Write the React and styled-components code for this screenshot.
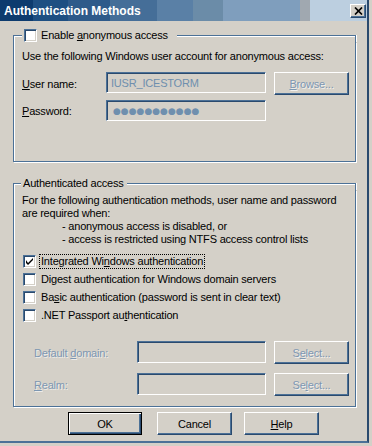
import React from "react";
import styled, { createGlobalStyle, css } from "styled-components";

const FACE = "#d4d0c8";
const SHADOW = "#4c7197";
const DARK = "#2a4a6e";
const DIS = "#7d97b2";

const Global = createGlobalStyle`
  html, body { margin: 0; padding: 0; background: ${FACE}; }
  body { font-family: "Liberation Sans", Arial, sans-serif; font-size: 11px; letter-spacing: -0.2px; color: #000; }
`;

const Screen = styled.div`
  width: 372px;
  height: 446px;
  display: flex;
  background: ${FACE};
  overflow: hidden;
`;

const Window = styled.div`
  width: 369px;
  height: 443px;
  box-sizing: border-box;
  border-right: 2px solid ${DARK};
  border-bottom: 2px solid ${SHADOW};
  background: ${FACE};
  display: flex;
  flex-direction: column;
`;

const TitleBar = styled.div`
  height: 21px;
  flex: none;
  display: flex;
  align-items: center;
  justify-content: space-between;
  padding: 0 1px 0 4px;
  background: linear-gradient(
    to right,
    #0d3b6e 0px, #0d3b6e 33px,
    #1e4f82 33px, #1e4f82 68px,
    #2e5a8a 68px, #2e5a8a 110px,
    #456e98 110px, #456e98 157px,
    #5a80a6 157px, #5a80a6 193px,
    #6b8ca8 193px, #6b8ca8 223px,
    #7f9ebd 223px, #7f9ebd 300px,
    #a0a8b0 300px, #a0a8b0 310px,
    #bccfe0 310px
  );
`;

const Title = styled.span`
  color: #fff;
  font-weight: bold;
  font-size: 12px;
  letter-spacing: 0;
`;

const CloseButton = styled.div`
  width: 16px;
  height: 14px;
  box-sizing: border-box;
  display: flex;
  align-items: center;
  justify-content: center;
  background: ${FACE};
  border: 1px solid;
  border-color: #fff ${DARK} ${DARK} #fff;
  box-shadow: inset -1px -1px 0 ${SHADOW};
`;

const Content = styled.div`
  flex: 1;
  display: flex;
  flex-direction: column;
  padding: 7px 11px 0 13px;
`;

const Group = styled.div`
  display: flex;
  flex-direction: column;
  margin-top: ${(p) => p.$top || 0}px;
`;

const GroupHeader = styled.div`
  display: flex;
  height: 14px;
`;

const CornerLeft = styled.div`
  width: ${(p) => p.$w}px;
  flex: none;
  margin-top: 7px;
  border-top: 1px solid ${SHADOW};
  border-left: 1px solid ${SHADOW};
  box-shadow: inset 1px 1px 0 #fff;
`;

const CornerRight = styled.div`
  flex: 1;
  margin-top: 7px;
  border-top: 1px solid ${SHADOW};
  border-right: 1px solid ${SHADOW};
  box-shadow: inset 0 1px 0 #fff, 1px 0 0 #fff;
`;

const Legend = styled.div`
  display: flex;
  align-items: center;
  gap: 4px;
  padding: 0 ${(p) => p.$pr}px 0 2px;
  line-height: 14px;
`;

const GroupBody = styled.div`
  height: ${(p) => p.$h}px;
  box-sizing: border-box;
  border: 1px solid ${SHADOW};
  border-top: 0;
  box-shadow: inset 1px 0 0 #fff, 1px 1px 0 #fff;
  padding: ${(p) => p.$pt}px 8px 0 8px;
  display: flex;
  flex-direction: column;
`;

const Text = styled.div`
  line-height: 13px;
  padding-left: ${(p) => p.$indent || 0}px;
  white-space: nowrap;
`;

const FormRow = styled.div`
  display: flex;
  align-items: center;
  height: ${(p) => p.$h || 23}px;
  margin-top: ${(p) => p.$top || 0}px;
`;

const FieldLabel = styled.span`
  width: ${(p) => p.$w}px;
  box-sizing: border-box;
  padding-left: ${(p) => p.$indent || 0}px;
  flex: none;
  color: ${(p) => (p.$disabled ? DIS : "#000")};
  ${(p) => p.$disabled && css`text-shadow: 1px 1px 0 rgba(255,255,255,0.6);`}
`;

const Field = styled.div`
  width: ${(p) => p.$w}px;
  height: ${(p) => p.$h || 21}px;
  box-sizing: border-box;
  flex: none;
  display: flex;
  align-items: center;
  padding-left: 4px;
  background: ${FACE};
  color: #6f8fae;
  border: 1px solid;
  border-color: ${SHADOW} #fff #fff ${SHADOW};
  box-shadow: inset 1px 1px 0 ${DARK}, inset -1px -1px 0 ${FACE};
  margin-right: 8px;
  align-self: flex-start;
`;

const Dots = styled.span`
  font-family: "DejaVu Sans", sans-serif;
  font-size: 9px;
  letter-spacing: 0px;
  color: #6f8fae;
  padding-left: 2px;
`;

const Button = styled.div`
  width: ${(p) => p.$w || 75}px;
  height: 23px;
  box-sizing: border-box;
  flex: none;
  display: flex;
  align-items: center;
  justify-content: center;
  margin-left: ${(p) => p.$ml || 0}px;
  background: ${FACE};
  color: ${(p) => (p.$disabled ? DIS : "#000")};
  ${(p) => p.$disabled && css`text-shadow: 1px 1px 0 rgba(255,255,255,0.7);`}
  ${(p) =>
    p.$default
      ? css`
          border: 1px solid #000;
          box-shadow: inset 1px 1px 0 #fff, inset -1px -1px 0 ${DARK}, inset -2px -2px 0 ${SHADOW};
        `
      : css`
          border: 1px solid;
          border-color: #fff ${DARK} ${DARK} #fff;
          box-shadow: inset -1px -1px 0 ${SHADOW};
        `}
`;

const CheckList = styled.div`
  display: flex;
  flex-direction: column;
  margin-top: 6px;
  padding-left: 1px;
`;

const CheckRow = styled.div`
  display: flex;
  align-items: center;
  height: 18px;
  gap: 4px;
`;

const Box = styled.div`
  width: 13px;
  height: 13px;
  box-sizing: border-box;
  flex: none;
  background: #fff;
  border: 1px solid;
  border-color: ${SHADOW} #fff #fff ${SHADOW};
  box-shadow: inset 1px 1px 0 ${DARK}, inset -1px -1px 0 ${FACE};
  display: flex;
  align-items: center;
  justify-content: center;
`;

const CheckLabel = styled.span`
  padding: 0 1px;
  line-height: 13px;
  border: 1px dotted ${(p) => (p.$focus ? "#000" : "transparent")};
  margin-left: -1px;
  white-space: nowrap;
`;

const ButtonRow = styled.div`
  display: flex;
  margin-top: 5px;
  padding-left: 55px;
`;

const U = styled.span`
  text-decoration: underline;
  text-underline-offset: 1px;
`;

function CheckBox({ checked }) {
  return (
    <Box>
      {checked && (
        <svg width="9" height="9" viewBox="0 0 9 9">
          <path d="M1 3v3l2 2 5-5V1L3 6z" fill="#000" />
        </svg>
      )}
    </Box>
  );
}

export default function App() {
  return (
    <>
      <Global />
      <Screen>
        <Window>
          <TitleBar>
            <Title>Authentication Methods</Title>
            <CloseButton>
              <svg width="9" height="8" viewBox="0 0 9 8">
                <path d="M1 0.5L8 7.5M8 0.5L1 7.5" stroke="#000" strokeWidth="1.7" />
              </svg>
            </CloseButton>
          </TitleBar>
          <Content>
            <Group>
              <GroupHeader>
                <CornerLeft $w={8} />
                <Legend $pr={9}>
                  <CheckBox />
                  <span>
                    Enable <U>a</U>nonymous access
                  </span>
                </Legend>
                <CornerRight />
              </GroupHeader>
              <GroupBody $h={120} $pt={8}>
                <Text>Use the following Windows user account for anonymous access:</Text>
                <FormRow $top={9}>
                  <FieldLabel $w={84}>
                    <U>U</U>ser name:
                  </FieldLabel>
                  <Field $w={160}>IUSR_ICESTORM</Field>
                  <Button $disabled>
                    <span>
                      <U>B</U>rowse...
                    </span>
                  </Button>
                </FormRow>
                <FormRow $top={5} $h={21}>
                  <FieldLabel $w={84}>
                    <U>P</U>assword:
                  </FieldLabel>
                  <Field $w={160}>
                    <Dots>●●●●●●●●●●●</Dots>
                  </Field>
                </FormRow>
              </GroupBody>
            </Group>

            <Group $top={14}>
              <GroupHeader>
                <CornerLeft $w={7} />
                <Legend $pr={3}>
                  <span>Authenticated access</span>
                </Legend>
                <CornerRight />
              </GroupHeader>
              <GroupBody $h={217} $pt={4}>
                <Text>For the following authentication methods, user name and password</Text>
                <Text>are required when:</Text>
                <Text $indent={40}>- anonymous access is disabled, or</Text>
                <Text $indent={40}>- access is restricted using NTFS access control lists</Text>
                <CheckList>
                  <CheckRow>
                    <CheckBox checked />
                    <CheckLabel $focus>
                      Integrated Wi<U>n</U>dows authentication
                    </CheckLabel>
                  </CheckRow>
                  <CheckRow>
                    <CheckBox />
                    <CheckLabel>
                      Di<U>g</U>est authentication for Windows domain servers
                    </CheckLabel>
                  </CheckRow>
                  <CheckRow>
                    <CheckBox />
                    <CheckLabel>
                      Ba<U>s</U>ic authentication (password is sent in clear text)
                    </CheckLabel>
                  </CheckRow>
                  <CheckRow>
                    <CheckBox />
                    <CheckLabel>
                      .NET Passport au<U>t</U>hentication
                    </CheckLabel>
                  </CheckRow>
                </CheckList>
                <FormRow $top={17}>
                  <FieldLabel $w={115} $indent={12} $disabled>
                    Default <U>d</U>omain:
                  </FieldLabel>
                  <Field $w={129} $h={22} />
                  <Button $disabled>
                    <span>
                      S<U>e</U>lect...
                    </span>
                  </Button>
                </FormRow>
                <FormRow $top={9}>
                  <FieldLabel $w={115} $indent={12} $disabled>
                    <U>R</U>ealm:
                  </FieldLabel>
                  <Field $w={129} $h={22} />
                  <Button $disabled>
                    <span>
                      Se<U>l</U>ect...
                    </span>
                  </Button>
                </FormRow>
              </GroupBody>
            </Group>

            <ButtonRow>
              <Button $default $w={74}>OK</Button>
              <Button $w={75} $ml={15}>Cancel</Button>
              <Button $w={75} $ml={12}>
                <span>
                  <U>H</U>elp
                </span>
              </Button>
            </ButtonRow>
          </Content>
        </Window>
      </Screen>
    </>
  );
}
